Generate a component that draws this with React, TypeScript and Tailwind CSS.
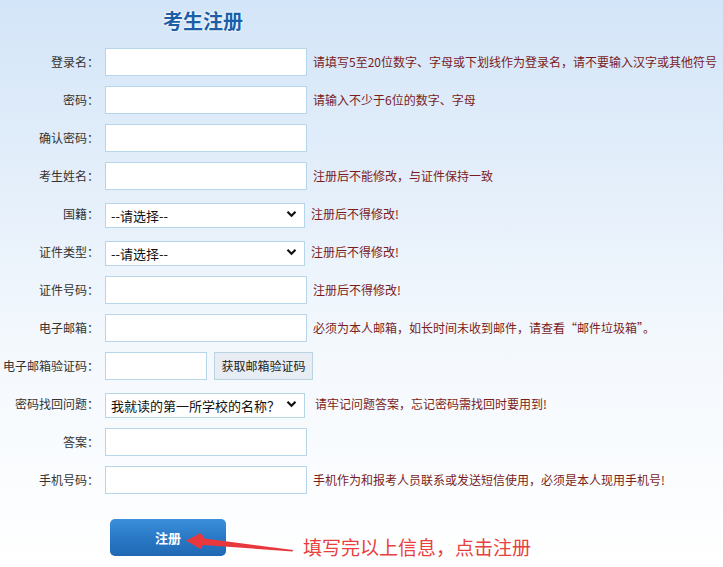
import React from "react";

const FONT = { fontFamily: '"Noto Sans CJK SC", "Noto Sans", sans-serif' };

function Chevron() {
  return (
    <svg
      className="pointer-events-none absolute right-[8px] top-1/2 -translate-y-1/2"
      width="11"
      height="8"
      viewBox="0 0 11 8"
    >
      <path d="M1.5 1.8 L5.5 5.8 L9.5 1.8" fill="none" stroke="#111" strokeWidth="2.2" />
    </svg>
  );
}

function TextInput({ w = "w-[202px]" }: { w?: string }) {
  return (
    <input
      type="text"
      className={`${w} h-[28px] border border-[#b7d5e8] bg-white rounded-none outline-none px-1 text-[13px]`}
    />
  );
}

function Select({ value }: { value: string }) {
  return (
    <div className="relative w-[200px] h-[25px]">
      <select
        className="w-full h-full appearance-none border border-[#b7d5e8] bg-white rounded-none pl-[5px] text-[13px] text-[#111] outline-none"
        defaultValue={value}
      >
        <option>{value}</option>
      </select>
      <Chevron />
    </div>
  );
}

function Row({
  label,
  children,
  hint,
  hintGap = "ml-[6px]",
}: {
  label: string;
  children: React.ReactNode;
  hint?: string;
  hintGap?: string;
}) {
  return (
    <div className="flex items-center h-[38px]">
      <div className="w-[99px] shrink-0 text-right text-[12px] text-[#333] whitespace-nowrap">{label}</div>
      <div className="ml-[6px] shrink-0 flex items-center">{children}</div>
      {hint && (
        <div className={`${hintGap} text-[12px] text-[#7a1c1c] whitespace-nowrap`}>{hint}</div>
      )}
    </div>
  );
}

export default function App() {
  return (
    <div
      className="relative w-[723px] h-[567px] overflow-hidden bg-[linear-gradient(180deg,#d3e5f8_0%,#e3eefa_30%,#f3f8fd_60%,#ffffff_100%)]"
      style={FONT}
    >
      <div className="h-[43px] pl-[163px] pt-[7px]">
        <h1
          className="text-[20px] leading-[28px] font-bold text-[#1c5ea8] tracking-[0px]"
          style={{ textShadow: "0 0 2px #fff, 0 0 3px #fff" }}
        >
          考生注册
        </h1>
      </div>
      <div className="flex flex-col">
        <Row label="登录名：" hint="请填写5至20位数字、字母或下划线作为登录名，请不要输入汉字或其他符号">
          <TextInput />
        </Row>
        <Row label="密码：" hint="请输入不少于6位的数字、字母">
          <TextInput />
        </Row>
        <Row label="确认密码：">
          <TextInput />
        </Row>
        <Row label="考生姓名：" hint="注册后不能修改，与证件保持一致">
          <TextInput />
        </Row>
        <Row label="国籍：" hint="注册后不得修改!">
          <Select value="--请选择--" />
        </Row>
        <Row label="证件类型：" hint="注册后不得修改!">
          <Select value="--请选择--" />
        </Row>
        <Row label="证件号码：" hint="注册后不得修改!">
          <TextInput />
        </Row>
        <Row label="电子邮箱：" hint="必须为本人邮箱，如长时间未收到邮件，请查看“邮件垃圾箱”。">
          <TextInput />
        </Row>
        <Row label="电子邮箱验证码：">
          <div className="flex items-center">
            <TextInput w="w-[102px]" />
            <button className="ml-[7px] w-[99px] h-[28px] border border-[#bcd3e3] bg-[#e7edf2] text-[12px] text-[#222]">
              获取邮箱验证码
            </button>
          </div>
        </Row>
        <Row label="密码找回问题：" hint="请牢记问题答案，忘记密码需找回时要用到!" hintGap="ml-[10px]">
          <Select value="我就读的第一所学校的名称？" />
        </Row>
        <Row label="答案：">
          <TextInput />
        </Row>
        <Row label="手机号码：" hint="手机作为和报考人员联系或发送短信使用，必须是本人现用手机号!">
          <TextInput />
        </Row>
      </div>
      <div className="flex items-start mt-[20px] pl-[110px]">
        <button className="w-[116px] h-[37px] rounded-[5px] bg-[linear-gradient(180deg,#3b90da_0%,#2a79c6_50%,#2168b3_100%)] text-white text-[13px] font-bold">
          注册
        </button>
        <div className="ml-[77px] mt-[15px] text-[19px] leading-[26px] text-[#e8403d] whitespace-nowrap">
          填写完以上信息，点击注册
        </div>
      </div>
      <svg
        className="absolute left-[180px] top-[528px]"
        width="120"
        height="30"
        viewBox="180 528 120 30"
      >
        <polygon
          points="186,540.5 201,533 204.5,538.5 293,550 292.5,551.5 203,545 200.5,549"
          fill="#e8383d"
        />
      </svg>
    </div>
  );
}
